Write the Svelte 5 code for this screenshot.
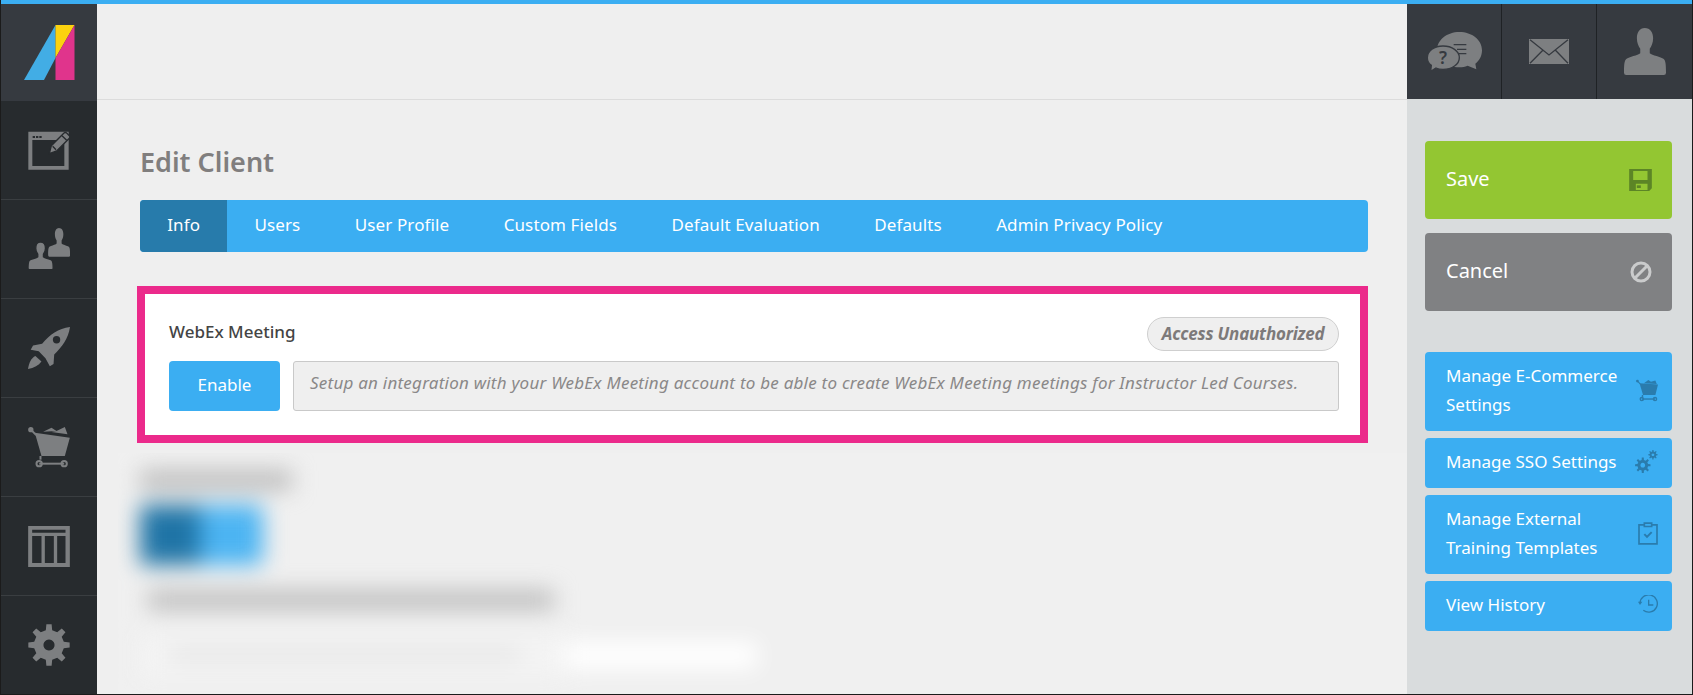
<script>
	// builds a toothed gear outline, used by the settings icon and the SSO button
	function gear(cx, cy, outer, inner, teeth) {
		const step = (Math.PI * 2) / teeth;
		const pts = [];
		for (let i = 0; i < teeth; i++) {
			const a = i * step - Math.PI / 2;
			const w = step * 0.2;
			const pt = (r, t) => `${(cx + r * Math.cos(t)).toFixed(1)} ${(cy + r * Math.sin(t)).toFixed(1)}`;
			pts.push(pt(inner, a - w * 1.35), pt(outer, a - w * 0.8), pt(outer, a + w * 0.8), pt(inner, a + w * 1.35));
		}
		return 'M' + pts.join('L') + 'Z';
	}

	const bust =
		'M37 0C47 0 52 8 52 18C52 26 49 32 46 36V44C50 48 66 50 71 54C74 57 75 62 75 78Q75 82 71 82H4Q0 82 0 78C0 62 1 57 4 54C9 50 25 48 29 44V36C26 32 23 26 23 18C23 8 28 0 37 0Z';

	const tabs = ['Info', 'Users', 'User Profile', 'Custom Fields', 'Default Evaluation', 'Defaults', 'Admin Privacy Policy'];
</script>

<div class="app">
	<div class="topline"></div>
	<div class="shell">
		<nav class="side">
			<div class="logo">
				<svg width="51" height="55" viewBox="0 0 51 55">
					<path d="M0 55L31.500 0V33L20 55Z" fill="#42ade5" />
					<path d="M31.500 0H50.500L31.500 33Z" fill="#fcd20f" />
					<path d="M50.500 0V55H31.500V33Z" fill="#e0348c" />
				</svg>
			</div>
			<div class="nav-item">
				<svg width="42" height="39" viewBox="0 0 126 117">
					<path fill-rule="evenodd" d="M1 2H122V116H1ZM13 27V105H109V27Z" />
					<path class="cut" d="M14 15h7v6h-7zM24 15h7v6h-7zM34 15h7v6h-7z" />
					<path class="pencil" d="M64 68L70 44L108 6Q112 3 116 6L124 14Q127 18 124 22L86 60Z" />
					<path class="cut-line" d="M74 46L84 56M102 14L116 28" />
				</svg>
			</div>
			<div class="nav-item">
				<svg width="42" height="42" viewBox="0 0 125 125">
					<path d={bust} transform="translate(60 0) scale(.87 1.04)" />
					<path class="outlined" d={bust} transform="translate(0 42)" />
				</svg>
			</div>
			<div class="nav-item">
				<svg width="42" height="42" viewBox="0 0 125 125">
					<path d="M125 0C120 35 100 60 78 82L76 110L65 117L52 93L32 72L8 68L15 55L42 50C65 22 90 5 125 0Z" />
					<path d="M0 125C3 105 10 92 22 86L40 103C32 115 18 122 0 125Z" />
					<circle class="cut" cx="85" cy="38" r="11" />
				</svg>
			</div>
			<div class="nav-item">
				<svg width="42" height="41" viewBox="0 0 125 123">
					<circle cx="8" cy="8" r="8" />
					<path d="M8 8L24 24" stroke="#7d7f81" stroke-width="6" />
					<path d="M20 17L125 32L110 87H40Z" />
					<path d="M45 14L70 2L85 12ZM85 12L110 0L118 22L70 15Z" />
					<path d="M37 87V98" stroke="#7d7f81" stroke-width="6" />
					<path class="ring" d="M33 110H108" />
					<circle class="ring" cx="33" cy="110" r="8" />
					<circle class="ring" cx="108" cy="110" r="8" />
				</svg>
			</div>
			<div class="nav-item">
				<svg width="42" height="41" viewBox="0 0 125 123">
					<path
						fill-rule="evenodd"
						d="M0 0H125V123H0ZM12 11V20H112V11ZM12 30V111H40V30ZM50 30V111H77V30ZM87 30V111H112V30Z"
					/>
				</svg>
			</div>
			<div class="nav-item last">
				<svg width="42" height="42" viewBox="0 0 125 125">
					<path fill-rule="evenodd" d="{gear(62.500, 62.500, 62, 45, 8)}M62.500 46a16.500 16.500 0 1 0 .01 0Z" />
				</svg>
			</div>
		</nav>

		<div class="center">
			<header class="header"></header>
			<main class="content">
				<h1>Edit Client</h1>
				<div class="tabs">
					{#each tabs as tab, i}
						<span class="tab" class:active={i === 0}>{tab}</span>
					{/each}
				</div>

				<section class="callout">
					<div class="callout-top">
						<span class="callout-name">WebEx Meeting</span>
						<span class="badge">Access Unauthorized</span>
					</div>
					<div class="callout-row">
						<span class="enable">Enable</span>
						<div class="descr">
							Setup an integration with your WebEx Meeting account to be able to create WebEx Meeting meetings for
							Instructor Led Courses.
						</div>
					</div>
				</section>

				<div class="hidden-area">
					<div class="blurred">
						<div class="b-title"></div>
						<div class="b-tabs"><span></span></div>
						<div class="b-line"></div>
						<div class="b-inputs">
							<div class="b-select"><i></i></div>
							<div class="b-white"></div>
						</div>
					</div>
				</div>
			</main>
		</div>

		<aside class="right">
			<div class="top-icons">
				<div class="top-icon">
					<svg width="55" height="40" viewBox="0 0 165 120">
						<path d="M97 0C135 0 165 24 165 55C165 72 157 86 145 95L148 112L122 101C114 104 106 106 97 106C60 106 30 85 30 55C30 24 60 0 97 0Z" />
						<path class="cut-line" d="M80 38H118M90 52H118M95 65H118" />
						<path class="bubble" d="M48 42C75 42 97 57 97 77C97 97 75 112 48 112C40 112 33 111 27 108L11 118L13 100C5 94 1 86 1 77C1 57 22 42 48 42Z" />
						<text x="48" y="97" class="qmark">?</text>
					</svg>
				</div>
				<div class="top-icon">
					<svg width="40" height="25" viewBox="0 0 120 75">
						<path d="M0 0H120V75H0Z" />
						<path class="cut-line" d="M3 2L60 48L117 2M3 73L43 32M117 73L78 32" />
					</svg>
				</div>
				<div class="top-icon">
					<svg width="42" height="47" viewBox="0 0 75 82" preserveAspectRatio="none"><path d={bust} /></svg>
				</div>
			</div>

			<div class="actions">
				<div class="btn big save">
					<span>Save</span>
					<svg width="23" height="22" viewBox="0 0 68 66">
						<path fill-rule="evenodd" d="M0 0H68V58L60 66H0ZM12 6V33H55V6ZM20 44V63H55V44Z" fill="#5c8526" />
						<path d="M23 49h12v8H23z" fill="#5c8526" />
					</svg>
				</div>
				<div class="btn big cancel">
					<span>Cancel</span>
					<svg width="22" height="22" viewBox="0 0 22 22" fill="none" stroke="#cacbcc" stroke-width="3">
						<circle cx="11" cy="11" r="9" />
						<path d="M5 17L17 5" />
					</svg>
				</div>

				<div class="links">
					<div class="btn link">
						<span>Manage E-Commerce Settings</span>
						<svg width="23" height="23" viewBox="0 0 125 123" fill="#2a7cad">
							<circle cx="8" cy="8" r="8" />
							<path d="M8 8L24 24" stroke="#2a7cad" stroke-width="6" />
							<path d="M20 20L125 28L110 87H40Z" />
							<path d="M45 20L70 2L85 12L110 4L118 24Z" />
							<path d="M37 87V98" stroke="#2a7cad" stroke-width="8" />
							<path d="M33 110H108" stroke="#2a7cad" stroke-width="8" />
							<circle cx="33" cy="110" r="9" fill="none" stroke="#2a7cad" stroke-width="8" />
							<circle cx="108" cy="110" r="9" fill="none" stroke="#2a7cad" stroke-width="8" />
						</svg>
					</div>
					<div class="btn link">
						<span>Manage SSO Settings</span>
						<svg width="23" height="23" viewBox="0 0 68 68" fill="#2a7cad">
							<path fill-rule="evenodd" d="{gear(23, 45, 23, 16, 8)}M23 38a7 7 0 1 0 .01 0Z" />
							<path fill-rule="evenodd" d="{gear(53, 14, 14, 10, 8)}M53 10a4 4 0 1 0 .01 0Z" />
						</svg>
					</div>
					<div class="btn link">
						<span>Manage External Training Templates</span>
						<svg width="20" height="23" viewBox="0 0 60 68" fill="none" stroke="#2a7cad" stroke-width="5">
							<path d="M19 8H3V65H57V8H41" />
							<path d="M19 3H41V13H19Z" />
							<path d="M19 36L27 44L41 30" stroke-width="6" />
						</svg>
					</div>
					<div class="btn link">
						<span>View History</span>
						<svg width="20" height="19" viewBox="0 0 60 57" fill="none" stroke="#2a7cad" stroke-width="4">
							<path d="M6 24A26 26 0 1 1 16 46" />
							<path d="M0 20H13L6 30Z" fill="#2a7cad" stroke="none" />
							<path d="M32 14V30H46" />
						</svg>
					</div>
				</div>
			</div>
		</aside>
	</div>
</div>

<style>
	:global(body) {
		margin: 0;
		background: #efefef;
	}

	.app {
		width: 1693px;
		height: 695px;
		box-sizing: border-box;
		display: flex;
		flex-direction: column;
		overflow: hidden;
		border-left: 1px solid #1b1b1b;
		border-right: 1px solid #1b1b1b;
		border-bottom: 1px solid #1b1b1b;
		font-family: 'Noto Sans', sans-serif;
		color: #fff;
	}

	.topline {
		height: 4px;
		flex: none;
		background: #3baef2;
	}

	.shell {
		flex: 1;
		display: flex;
		min-height: 0;
	}

	/* left rail */
	.side {
		width: 96px;
		flex: none;
		display: flex;
		flex-direction: column;
		background: #272b2e;
	}

	.side svg {
		fill: #7d7f81;
	}

	.logo {
		height: 97px;
		flex: none;
		display: flex;
		align-items: center;
		justify-content: center;
		background: #363a40;
	}

	.nav-item {
		height: 98px;
		flex: none;
		display: flex;
		align-items: center;
		justify-content: center;
		border-bottom: 1px solid #3a3e41;
		box-sizing: content-box;
	}

	.nav-item.last {
		border-bottom: 0;
	}

	.cut {
		fill: #272b2e;
	}

	.cut-line {
		fill: none;
		stroke: #363a40;
		stroke-width: 4;
	}

	.side .cut-line {
		stroke: #272b2e;
	}

	.pencil,
	.outlined {
		stroke: #272b2e;
		stroke-width: 4;
	}

	.side .ring {
		fill: none;
		stroke: #7d7f81;
		stroke-width: 6;
	}

	/* middle column */
	.center {
		flex: 1;
		min-width: 0;
		display: flex;
		flex-direction: column;
		background: #efefef;
	}

	.header {
		height: 95px;
		flex: none;
		border-bottom: 1px solid #dcdcdc;
	}

	.content {
		flex: 1;
		min-height: 0;
		padding: 43px 39px 0 43px;
	}

	h1 {
		margin: 0 0 20px;
		font-size: 27px;
		line-height: 37px;
		font-weight: 600;
		color: #807e7e;
	}

	.tabs {
		height: 52px;
		display: flex;
		overflow: hidden;
		border-radius: 4px;
		background: #3baef2;
	}

	.tab {
		padding: 0 27.2px 4px;
		display: flex;
		align-items: center;
		font-size: 17px;
		letter-spacing: 0.12px;
	}

	.tab.active {
		background: #277bab;
	}

	.callout {
		margin: 34px 0 0 -3px;
		padding: 23px 21px 24px 24px;
		border: 8px solid #eb2a8b;
		background: #fff;
	}

	.callout-top {
		height: 34px;
		display: flex;
		align-items: center;
		justify-content: space-between;
		margin-bottom: 10px;
	}

	.callout-name {
		font-size: 17px;
		font-weight: 500;
		color: #444;
		padding-bottom: 6px;
	}

	.badge {
		box-sizing: border-box;
		height: 34px;
		padding: 0 13.5px 1px;
		display: flex;
		align-items: center;
		border: 1px solid #cfcfcf;
		border-radius: 17px;
		background: #efefef;
		font-size: 17px;
		font-weight: 700;
		font-style: italic;
		letter-spacing: -0.2px;
		color: #7d7a7a;
	}

	.callout-row {
		display: flex;
		gap: 13px;
		height: 50px;
	}

	.enable {
		width: 111px;
		flex: none;
		box-sizing: border-box;
		padding-bottom: 3px;
		display: flex;
		align-items: center;
		justify-content: center;
		border-radius: 4px;
		background: #3baef2;
		font-size: 17px;
	}

	.descr {
		flex: 1;
		box-sizing: border-box;
		padding: 0 14px 8px 16px;
		display: flex;
		align-items: center;
		border: 1px solid #c9c9c9;
		border-radius: 3px;
		background: #efefef;
		font-size: 17px;
		letter-spacing: 0.23px;
		font-style: italic;
		color: #8a8888;
		white-space: nowrap;
	}

	/* section that is blurred out in the screenshot */
	.hidden-area {
		margin: 10px -39px 0 -22px;
		height: 240px;
		overflow: hidden;
		background: #f0f0f0;
	}

	.blurred {
		padding: 17px 0 0 22px;
		filter: blur(11px);
	}

	.b-title {
		width: 152px;
		height: 20px;
		background: #bcbcbc;
	}

	.b-tabs {
		width: 123px;
		height: 60px;
		margin-top: 15px;
		border-radius: 6px;
		background: #4cb4f2;
	}

	.b-tabs span {
		display: block;
		width: 60px;
		height: 100%;
		background: #1f74a6;
	}

	.b-line {
		width: 406px;
		height: 20px;
		margin: 25px 0 0 8px;
		background: #bebebe;
	}

	.b-inputs {
		display: flex;
		margin-top: 24px;
		height: 44px;
	}

	.b-select {
		width: 425px;
		padding-top: 16px;
		box-sizing: border-box;
		background: #f3f3f3;
	}

	.b-select i {
		display: block;
		width: 350px;
		height: 10px;
		margin-left: 30px;
		background: #e0e0e0;
	}

	.b-white {
		width: 192px;
		height: 27px;
		margin-top: 8px;
		background: #fff;
	}

	/* right column */
	.right {
		width: 285px;
		flex: none;
		display: flex;
		flex-direction: column;
		background: #d9dcdd;
	}

	.top-icons {
		height: 95px;
		flex: none;
		display: flex;
		background: #363a40;
	}

	.top-icon {
		width: 95px;
		display: flex;
		align-items: center;
		justify-content: center;
		border-right: 1px solid #1f2225;
		box-sizing: border-box;
	}

	.top-icon:last-child {
		border-right: 0;
	}

	.top-icons svg {
		fill: #7d7f81;
	}

	.bubble {
		stroke: #363a40;
		stroke-width: 4;
	}

	.qmark {
		font-size: 52px;
		font-weight: 600;
		fill: #363a40;
		text-anchor: middle;
		font-family: 'Noto Sans', sans-serif;
	}

	.actions {
		padding: 42px 20px 0 18px;
		display: flex;
		flex-direction: column;
		gap: 14px;
	}

	.btn {
		display: flex;
		align-items: center;
		justify-content: space-between;
		border-radius: 4px;
		box-sizing: border-box;
	}

	.btn.big {
		height: 78px;
		padding: 0 20px 0 21px;
		font-size: 20px;
	}

	.btn.big span {
		padding-bottom: 3px;
	}

	.save {
		background: #93c632;
	}

	.cancel {
		background: #808183;
	}

	.links {
		margin-top: 27px;
		display: flex;
		flex-direction: column;
		gap: 7px;
	}

	.btn.link {
		min-height: 50px;
		padding: 9px 14px 12px 21px;
		background: #3baef2;
		font-size: 17px;
		line-height: 29px;
	}

	.btn.link span {
		max-width: 190px;
	}
</style>
